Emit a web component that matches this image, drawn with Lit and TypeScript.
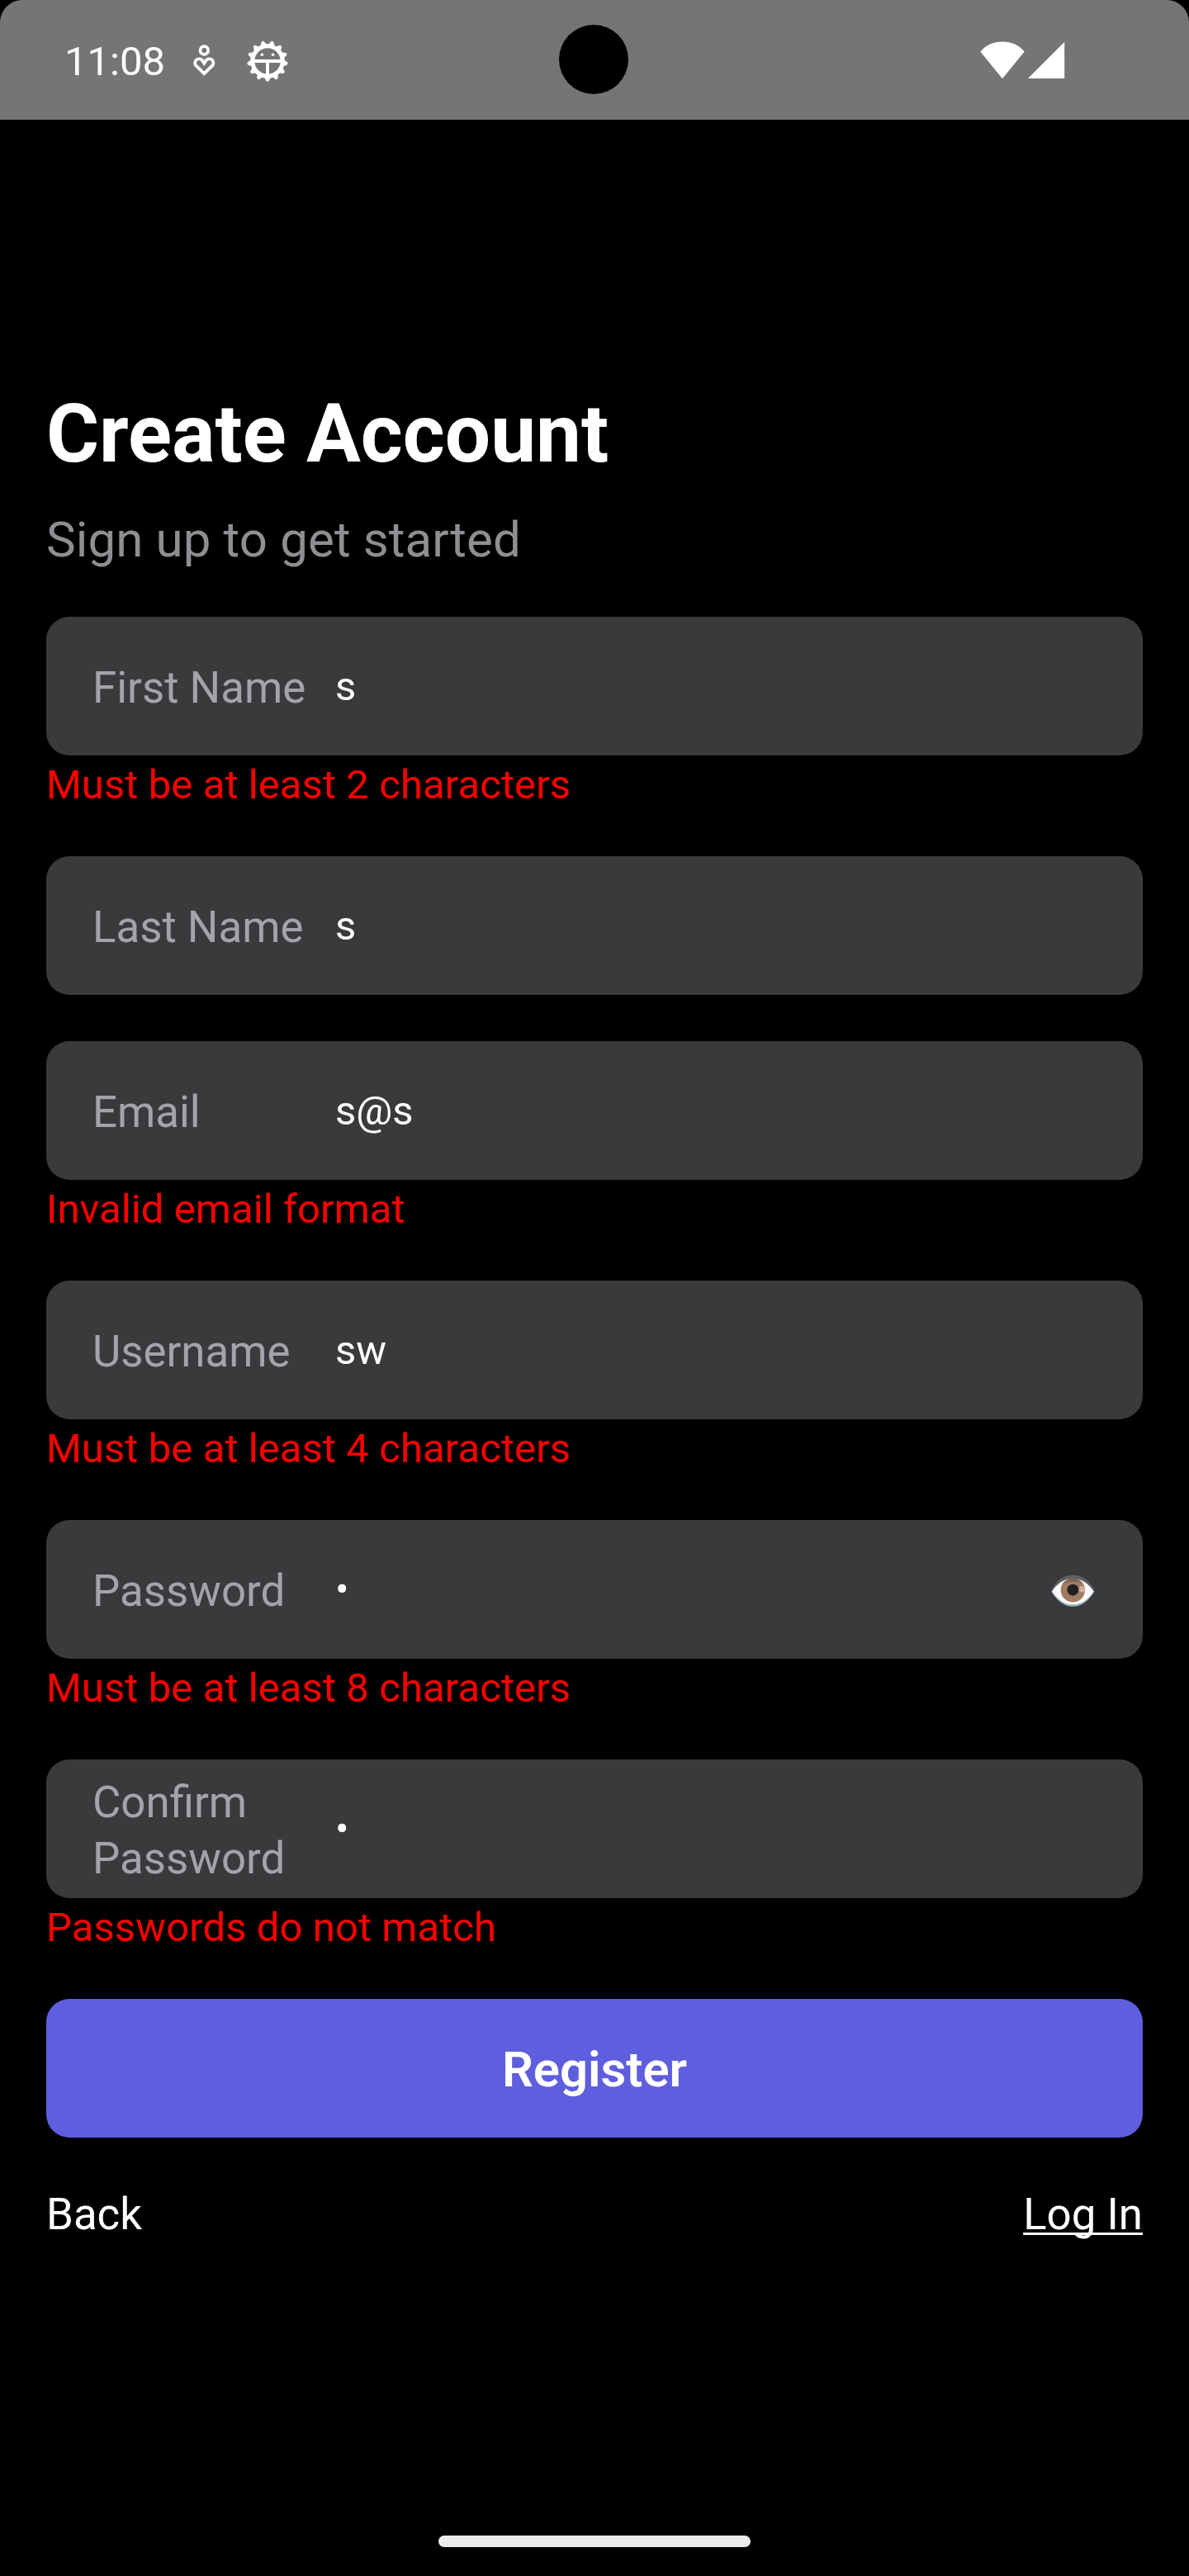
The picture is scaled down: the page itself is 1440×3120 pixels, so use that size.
import { LitElement, html, css, svg, nothing } from "lit";
import { customElement, property } from "lit/decorators.js";

interface Field {
  label: string;
  value: string;
  error?: string;
  toggle?: boolean;
}

const FIELDS: Field[] = [
  { label: "First Name", value: "s", error: "Must be at least 2 characters" },
  { label: "Last Name", value: "s" },
  { label: "Email", value: "s@s", error: "Invalid email format" },
  { label: "Username", value: "sw", error: "Must be at least 4 characters" },
  { label: "Password", value: "•", error: "Must be at least 8 characters", toggle: true },
  { label: "Confirm Password", value: "•", error: "Passwords do not match" },
];

const TEETH = Array.from({ length: 13 }, (_, i) => 180 + (i * 360) / 13);

@customElement("status-bar")
export class StatusBar extends LitElement {
  static styles = css`
    :host {
      display: block;
      background: #000;
    }
    .bar {
      position: relative;
      display: flex;
      align-items: center;
      justify-content: space-between;
      box-sizing: border-box;
      height: 145px;
      padding: 0 150px 0 78px;
      background: #757575;
      border-radius: 27px 27px 0 0;
      color: #fff;
    }
    .group {
      display: flex;
      align-items: center;
    }
    .time {
      font-size: 49px;
      line-height: 60px;
      padding-top: 5px;
    }
    svg {
      display: block;
    }
    .heart {
      margin-left: 32px;
      margin-top: 1px;
    }
    .badge {
      margin-left: 36px;
      margin-top: 2px;
    }
    .signals {
      padding-top: 1px;
    }
    .signal {
      margin-left: 4px;
    }
    .camera {
      position: absolute;
      left: 677px;
      top: 30px;
      width: 84px;
      height: 84px;
      border-radius: 50%;
      background: #000;
    }
  `;

  render() {
    return html`
      <div class="bar">
        <div class="group">
          <span class="time">11:08</span>
          <svg class="heart" width="30" height="40" viewBox="232 53 30 40" fill="none" stroke="#fff">
            <circle cx="247.3" cy="61" r="4.8" stroke-width="3.7" />
            <path
              stroke-width="3.8"
              d="M247.3 89.2L237.6 79.7A4.95 4.95 0 0 1 244.7 72.8L247.3 76.6L249.9 72.8A4.95 4.95 0 0 1 257 79.7Z"
            />
          </svg>
          <svg class="badge" width="52" height="52" viewBox="-26 -26 52 52" fill="none" stroke="#fff">
            <circle r="18.2" stroke-width="5" />
            ${TEETH.map(
              (a) => svg`<path transform=${`rotate(${a})`} d="M-4.4 -19.2Q-2.6 -20.4 -2.2 -22.4Q-1.6 -24.6 0 -24.6Q1.6 -24.6 2.2 -22.4Q2.6 -20.4 4.4 -19.2Z" fill="#fff" stroke-width="0.5" />`,
            )}
            <path d="M-17 0H17M0 0V17" stroke-width="3.9" />
            <circle cx="-6.7" cy="-7.8" r="1.8" fill="#fff" stroke="none" />
            <circle cx="6.6" cy="-7.8" r="1.8" fill="#fff" stroke="none" />
          </svg>
        </div>
        <div class="group signals">
          <svg width="54" height="46" viewBox="0 0 54 46">
            <path d="M0.3 12.4C7 4.6 16 0.4 27 0.4S47 4.6 53.7 12.4L27 45.3Z" fill="#fff" />
          </svg>
          <svg class="signal" width="45" height="46" viewBox="0 0 45 46">
            <path d="M0 45L44.2 0.7V45Z" fill="#fff" />
          </svg>
        </div>
        <div class="camera"></div>
      </div>
    `;
  }
}

@customElement("form-field")
export class FormField extends LitElement {
  @property({ attribute: false }) field!: Field;

  static styles = css`
    :host {
      display: block;
    }
    .box {
      display: flex;
      align-items: center;
      box-sizing: border-box;
      height: 168px;
      padding: 0 56px;
      border-radius: 28px;
      background: #3a3a3c;
    }
    .label {
      width: 280px;
      padding-top: 3px;
      margin-right: 14px;
      color: #a3a3ab;
      font-size: 52.8px;
      line-height: 68px;
    }
    .value {
      flex: 1;
      padding-top: 1px;
      color: #fff;
      font-size: 49px;
      line-height: 60px;
    }
    .eye {
      margin-top: 4px;
    }
    .error {
      box-sizing: border-box;
      height: 66px;
      padding-top: 5px;
      color: #ff0000;
      font-size: 49px;
      line-height: 61px;
      letter-spacing: 0.09px;
    }
  `;

  render() {
    const f = this.field;
    return html`
      <div class="box">
        <div class="label">${f.label}</div>
        <div class="value">${f.value}</div>
        ${f.toggle
          ? html`<svg class="eye" width="56" height="40" viewBox="91 82 168 120">
              <path d="M95 144Q128 198 173 198T251 144Q224 98 173 98T95 144Z" fill="#9db2be" />
              <path d="M98 144Q130 191 173 191T248 144Q218 96 173 96T98 144Z" fill="#fafafa" />
              <path d="M137 113Q153 96 173 96T209 113A44 44 0 1 1 137 113Z" fill="#a27b64" />
              <path d="M137 113Q153 96 173 96T209 113Q173 102 137 113Z" fill="#806150" />
              <path d="M93 146Q118 84 173 84T253 146Q219 97 173 97T93 146Z" fill="#5f6062" />
              <circle cx="173" cy="138" r="21" fill="#212121" />
              <circle cx="206" cy="135" r="11" fill="#d1ad96" />
            </svg>`
          : nothing}
      </div>
      ${f.error ? html`<div class="error">${f.error}</div>` : nothing}
    `;
  }
}

@customElement("app-root")
export class AppRoot extends LitElement {
  static styles = css`
    :host {
      display: block;
      font-family: Roboto, "Liberation Sans", sans-serif;
      font-weight: 400;
    }
    .screen {
      display: flex;
      flex-direction: column;
      box-sizing: border-box;
      height: 3120px;
      background: #000;
      color: #fff;
    }
    .content {
      flex: 1;
      padding: 323px 56px 0;
    }
    .title {
      margin: 0;
      font-size: 98px;
      line-height: 116px;
      font-weight: 700;
    }
    .subtitle {
      margin: 34px 0 57px;
      color: #8e8e93;
      font-size: 60px;
      line-height: 72px;
      letter-spacing: 0.13px;
    }
    .fields {
      display: flex;
      flex-direction: column;
      gap: 56px;
    }
    .register {
      display: flex;
      align-items: center;
      justify-content: center;
      box-sizing: border-box;
      width: 100%;
      height: 168px;
      margin: 56px 0 0;
      padding: 3px 0 0;
      border: 0;
      border-radius: 28px;
      background: #5e5ede;
      color: #fff;
      font: 600 59.8px/70px Roboto, "Liberation Sans", sans-serif;
    }
    .links {
      display: flex;
      justify-content: space-between;
      margin-top: 59px;
      font-size: 52.8px;
      line-height: 68px;
    }
    .login {
      text-decoration: underline;
      text-decoration-skip-ink: none;
      text-decoration-thickness: 2.6px;
      text-underline-offset: 4px;
    }
    .home {
      align-self: center;
      width: 378px;
      height: 14px;
      margin-bottom: 35px;
      border-radius: 7px;
      background: #ebebeb;
    }
  `;

  render() {
    return html`
      <div class="screen">
        <status-bar></status-bar>
        <div class="content">
          <h1 class="title">Create Account</h1>
          <p class="subtitle">Sign up to get started</p>
          <div class="fields">${FIELDS.map((f) => html`<form-field .field=${f}></form-field>`)}</div>
          <button class="register">Register</button>
          <div class="links">
            <span>Back</span>
            <span class="login">Log In</span>
          </div>
        </div>
        <div class="home"></div>
      </div>
    `;
  }
}
